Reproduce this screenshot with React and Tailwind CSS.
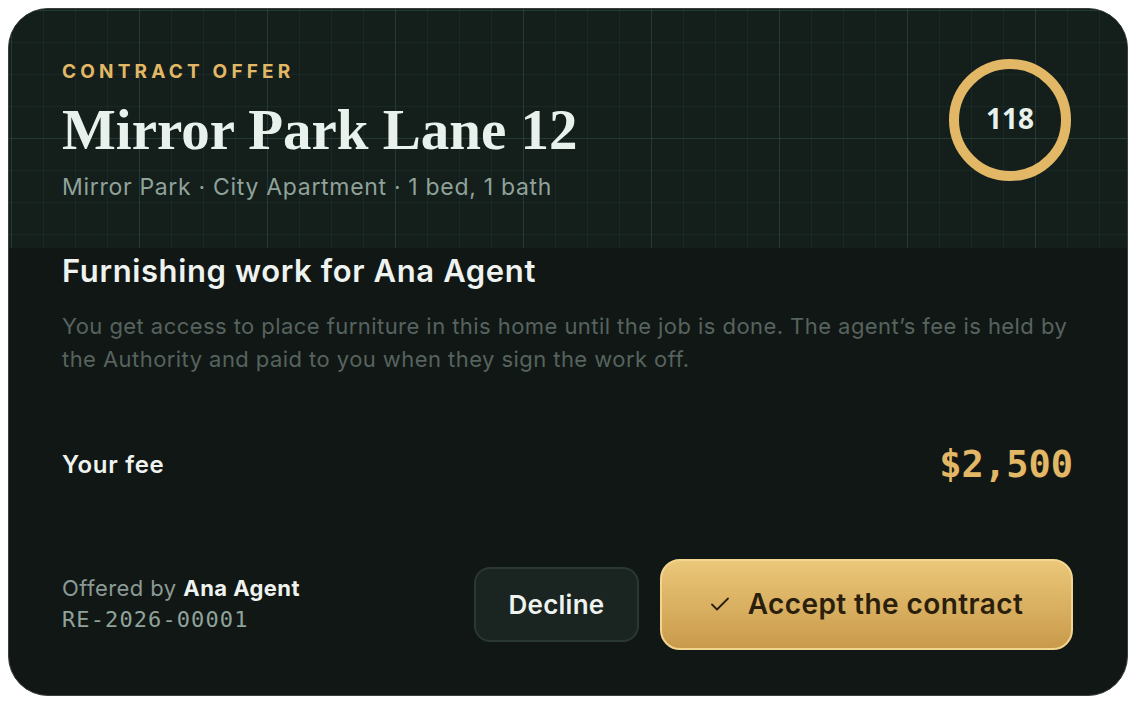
import React from "react";

const gridStyle = {
  backgroundImage:
    "linear-gradient(to right, rgba(60,110,95,0.26) 1px, transparent 1px), linear-gradient(to bottom, rgba(60,110,95,0.26) 1px, transparent 1px), linear-gradient(to right, rgba(60,110,95,0.13) 1px, transparent 1px), linear-gradient(to bottom, rgba(60,110,95,0.13) 1px, transparent 1px)",
  backgroundSize: "128px 128px, 128px 128px, 32px 32px, 32px 32px",
  backgroundPosition: "2px 1px, 2px 1px, 2px 1px, 2px 1px",
};

export default function App() {
  return (
    <div className="w-[1136px] h-[704px] bg-white p-2" style={{ fontFamily: "Inter, 'Noto Sans', sans-serif" }}>
      <div className="w-[1120px] h-[688px] rounded-[40px] border border-[#3a403e] bg-[#111715] overflow-hidden flex flex-col">
        <div className="h-[239px] bg-[#141e1b] flex justify-between pl-[53px] pr-[56px]" style={gridStyle}>
          <div className="flex flex-col pt-[51px]">
            <div className="text-[19px] font-bold tracking-[0.22em] text-[#e2b866] leading-[24px]">CONTRACT OFFER</div>
            <div className="mt-[13px] text-[57px] font-bold leading-[66px] text-[#e9f1ec]" style={{ fontFamily: "'Liberation Serif', serif" }}>Mirror Park Lane 12</div>
            <div className="mt-[9px] text-[23px] leading-[30px] text-[#8fa39b] tracking-[0.03em]">Mirror Park · City Apartment · 1 bed, 1 bath</div>
          </div>
          <div className="pt-[50px]">
            <div className="w-[122px] h-[122px] rounded-full border-[10px] border-[#e2b866] flex items-center justify-center">
              <span className="text-[28px] font-bold text-[#e9f1ec] mb-[4px]" style={{ fontFamily: "'Open Sans', sans-serif" }}>118</span>
            </div>
          </div>
        </div>
        <div className="flex-1 flex flex-col pl-[53px] pr-[54px]">
          <div className="mt-[3px] text-[31px] font-semibold leading-[40px] text-[#eef3f0] tracking-[0.02em]">Furnishing work for Ana Agent</div>
          <div className="mt-[19px] text-[22px] leading-[33px] text-[#56635e] tracking-[0.02em] w-[1015px]">
            You get access to place furniture in this home until the job is done. The agent’s fee is held by the Authority and paid to you when they sign the work off.
          </div>
          <div className="mt-[61px] flex items-center justify-between">
            <div className="text-[24px] font-semibold text-[#eef3f0] tracking-[0.03em]">Your fee</div>
            <div className="text-[37px] font-bold text-[#e2b866]" style={{ fontFamily: "'DejaVu Sans Mono', monospace" }}>$2,500</div>
          </div>
          <div className="mt-[66px] flex items-center justify-between">
            <div className="flex flex-col">
              <div className="text-[22px] leading-[30px] text-[#8b9a94] tracking-[0.02em]">
                Offered by <span className="font-bold text-[#eef3f0]">Ana Agent</span>
              </div>
              <div className="mt-[2px] text-[22px] leading-[30px] text-[#8fa39b] tracking-[1.1px]" style={{ fontFamily: "'DejaVu Sans Mono', monospace" }}>RE-2026-00001</div>
            </div>
            <div className="flex items-center gap-[21px]">
              <button className="w-[165px] h-[75px] rounded-[16px] bg-[#1a2521] border-2 border-[#2a3833] text-[26px] font-semibold text-[#eef3f0] tracking-[0.01em]">Decline</button>
              <button className="w-[413px] h-[91px] rounded-[20px] border-2 border-[#f2d58e] bg-gradient-to-b from-[#ebc779] to-[#c99a4b] flex items-center justify-center gap-[18px] text-[28px] font-semibold text-[#2a1f0c] tracking-[0.015em]">
                <svg width="20" height="20" viewBox="0 0 20 20" fill="none" stroke="#2a1f0c" strokeWidth="1.8" strokeLinecap="round" strokeLinejoin="round"><path d="M2 10.5l5 5L18 4.5" /></svg>
                Accept the contract
              </button>
            </div>
          </div>
        </div>
      </div>
    </div>
  );
}
